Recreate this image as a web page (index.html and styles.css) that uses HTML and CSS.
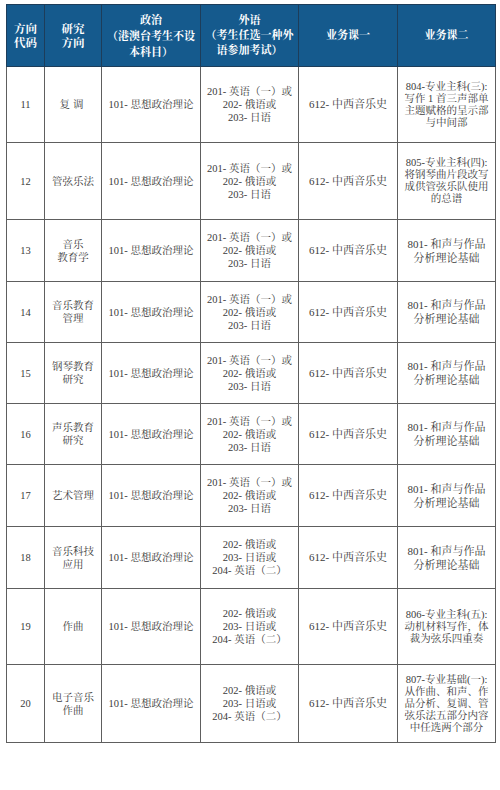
FILE: index.html
```html
<!DOCTYPE html>
<html lang="zh">
<head>
<meta charset="utf-8">
<title>招生目录</title>
<link rel="stylesheet" href="styles.css">
</head>
<body>
<table class="plan">
  <colgroup>
    <col class="c1"><col class="c2"><col class="c3"><col class="c4"><col class="c5"><col class="c6">
  </colgroup>
  <thead>
    <tr class="head">
      <th class="h1">方向<br>代码</th>
      <th class="h1">研究<br>方向</th>
      <th class="h3">政治<br>（港澳台考生不设<br>本科目）</th>
      <th>外语<br>（考生任选一种外<br>语参加考试）</th>
      <th>业务课一</th>
      <th>业务课二</th>
    </tr>
  </thead>
  <tbody>
    <tr class="r76">
      <td>11</td>
      <td class="wide">复调</td>
      <td>101- 思想政治理论</td>
      <td>201- 英语（一）或<br>202- 俄语或<br>203- 日语</td>
      <td class="big">612- 中西音乐史</td>
      <td class="last">804-专业主科(三):<br>写作 1 首三声部单<br>主题赋格的呈示部<br>与中间部</td>
    </tr>
    <tr class="r77">
      <td>12</td>
      <td>管弦乐法</td>
      <td>101- 思想政治理论</td>
      <td>201- 英语（一）或<br>202- 俄语或<br>203- 日语</td>
      <td class="big">612- 中西音乐史</td>
      <td class="last">805-专业主科(四):<br>将钢琴曲片段改写<br>成供管弦乐队使用<br>的总谱</td>
    </tr>
    <tr class="r62">
      <td>13</td>
      <td>音乐<br>教育学</td>
      <td>101- 思想政治理论</td>
      <td>201- 英语（一）或<br>202- 俄语或<br>203- 日语</td>
      <td class="big">612- 中西音乐史</td>
      <td class="last2">801- 和声与作品<br>分析理论基础</td>
    </tr>
    <tr class="r61">
      <td>14</td>
      <td>音乐教育<br>管理</td>
      <td>101- 思想政治理论</td>
      <td>201- 英语（一）或<br>202- 俄语或<br>203- 日语</td>
      <td class="big">612- 中西音乐史</td>
      <td class="last2">801- 和声与作品<br>分析理论基础</td>
    </tr>
    <tr class="r61">
      <td>15</td>
      <td>钢琴教育<br>研究</td>
      <td>101- 思想政治理论</td>
      <td>201- 英语（一）或<br>202- 俄语或<br>203- 日语</td>
      <td class="big">612- 中西音乐史</td>
      <td class="last2">801- 和声与作品<br>分析理论基础</td>
    </tr>
    <tr class="r61">
      <td>16</td>
      <td>声乐教育<br>研究</td>
      <td>101- 思想政治理论</td>
      <td>201- 英语（一）或<br>202- 俄语或<br>203- 日语</td>
      <td class="big">612- 中西音乐史</td>
      <td class="last2">801- 和声与作品<br>分析理论基础</td>
    </tr>
    <tr class="r62">
      <td>17</td>
      <td>艺术管理</td>
      <td>101- 思想政治理论</td>
      <td>201- 英语（一）或<br>202- 俄语或<br>203- 日语</td>
      <td class="big">612- 中西音乐史</td>
      <td class="last2">801- 和声与作品<br>分析理论基础</td>
    </tr>
    <tr class="r62">
      <td>18</td>
      <td>音乐科技<br>应用</td>
      <td>101- 思想政治理论</td>
      <td>202- 俄语或<br>203- 日语或<br>204- 英语（二）</td>
      <td class="big">612- 中西音乐史</td>
      <td class="last2">801- 和声与作品<br>分析理论基础</td>
    </tr>
    <tr class="r76">
      <td>19</td>
      <td>作曲</td>
      <td>101- 思想政治理论</td>
      <td>202- 俄语或<br>203- 日语或<br>204- 英语（二）</td>
      <td class="big">612- 中西音乐史</td>
      <td class="last">806-专业主科(五):<br>动机材料写作，体<br>裁为弦乐四重奏</td>
    </tr>
    <tr class="r78">
      <td>20</td>
      <td>电子音乐<br>作曲</td>
      <td>101- 思想政治理论</td>
      <td>202- 俄语或<br>203- 日语或<br>204- 英语（二）</td>
      <td class="big">612- 中西音乐史</td>
      <td class="last">807-专业基础(一):<br>从作曲、和声、作<br>品分析、复调、管<br>弦乐法五部分内容<br>中任选两个部分</td>
    </tr>
  </tbody>
</table>
</body>
</html>
```

FILE: styles.css
```css
html, body {
  margin: 0;
  padding: 0;
  background: #ffffff;
}

body {
  font-family: "Liberation Serif", "Noto Serif CJK SC", "Noto Sans CJK SC", serif;
  color: #3c3c3c;
}

.plan {
  margin: 4px 0 0 6px;
  width: 489px;
  border-collapse: collapse;
  table-layout: fixed;
}

.c1 { width: 38px; }
.c2 { width: 57px; }
.c3 { width: 99px; }
.c4 { width: 98px; }
.c5 { width: 99px; }
.c6 { width: 98px; }

.head {
  height: 62px;
  background: #155a8d;
}

.head th {
  color: #ffffff;
  font-weight: bold;
  font-size: 11px;
  line-height: 15px;
  text-align: center;
  vertical-align: middle;
  padding: 0 2px;
  border: 1px solid #1d3d5a;
}

.head .h1 {
  font-size: 11.5px;
  line-height: 14px;
}

.head .h3 {
  line-height: 16px;
}

.plan td {
  border: 1px solid #5e5e5e;
  font-size: 10.5px;
  line-height: 13px;
  text-align: center;
  vertical-align: middle;
  padding: 0 3px;
  white-space: nowrap;
}

.plan td.big {
  font-size: 11px;
}

.plan td.wide {
  letter-spacing: 3px;
}

.plan td.last {
  font-size: 10.5px;
  line-height: 12px;
  padding: 0 2px;
}

.plan td.last2 {
  font-size: 11px;
  line-height: 14px;
}

.r76 { height: 76px; }
.r77 { height: 77px; }
.r78 { height: 78px; }
.r62 { height: 62px; }
.r61 { height: 61px; }
```
